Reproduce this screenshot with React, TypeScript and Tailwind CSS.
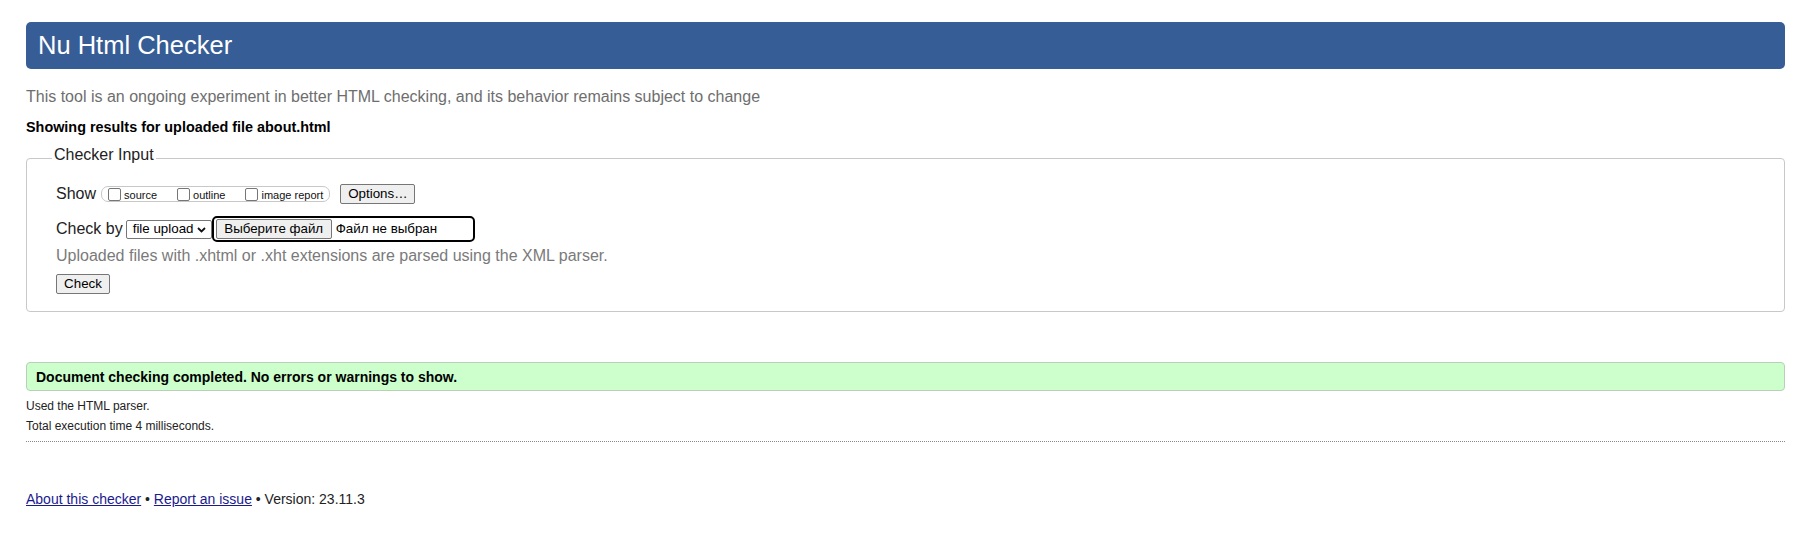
import React from 'react';

const sans = { fontFamily: '"Liberation Sans", Arial, sans-serif' };

function Box({ label }: { label: string }) {
  return (
    <span className="flex items-center mr-[20px] last:mr-0">
      <span className="w-[13px] h-[13px] border border-[#767676] rounded-[2px] bg-white" />
      <span className="ml-[3px] text-[11px] leading-none text-[#111] mt-[3px]">{label}</span>
    </span>
  );
}

function NativeButton({ children, className = '' }: { children: React.ReactNode; className?: string }) {
  return (
    <button
      type="button"
      className={`h-[20px] px-[7px] border border-[#767676] rounded-[2px] bg-[#efefef] text-[13.33px] leading-none text-black ${className}`}
    >
      {children}
    </button>
  );
}

export default function App() {
  return (
    <div className="bg-white min-h-[545px] pl-[26px] pr-[21px] pt-[22px]" style={sans}>
      <div className="h-[47px] rounded-[5px] bg-[#365d95] flex items-center pl-[12px]">
        <h1 className="text-[25.5px] leading-none text-white">Nu Html Checker</h1>
      </div>

      <p className="mt-[18px] text-[16px] leading-[20px] text-[#6e6e6e]">
        This tool is an ongoing experiment in better HTML checking, and its behavior remains subject to change
      </p>
      <p className="mt-[11px] text-[14.4px] leading-[18px] font-bold text-black">
        Showing results for uploaded file about.html
      </p>

      <fieldset className="mt-[10px] border border-[#c8c8c8] rounded-[4px] pl-[29px] pt-[13px] pb-[17px]">
        <legend className="-ml-[4px] px-[2px] pb-[7px] text-[16px] leading-[18px] text-[#222]">Checker Input</legend>

        <div className="flex items-center h-[20px]">
          <span className="text-[16px] leading-none text-[#222]">Show</span>
          <span className="ml-[5px] h-[16px] flex items-center border border-[#c8c8c8] rounded-[7px] pl-[6px] pr-[6px]">
            <Box label="source" />
            <Box label="outline" />
            <Box label="image report" />
          </span>
          <NativeButton className="ml-[10px] w-[75px]">Options…</NativeButton>
        </div>

        <div className="flex items-center h-[26px] mt-[12px]">
          <span className="text-[16px] leading-none text-[#222]">Check by</span>
          <span className="ml-[3px] h-[19px] w-[86px] flex items-center justify-between border border-[#767676] rounded-[2px] bg-white pl-[6px] pr-[5px]">
            <span className="text-[13.33px] leading-none text-black">file upload</span>
            <svg width="9" height="6" viewBox="0 0 9 6" className="mt-[1px]">
              <path d="M1 1l3.5 3.5L8 1" fill="none" stroke="#111" strokeWidth="1.8" />
            </svg>
          </span>
          <span className="ml-0 h-[26px] w-[263px] flex items-center border-2 border-black rounded-[5px] pl-[2px]">
            <NativeButton className="h-[19px] w-[116px] px-0">Выберите файл</NativeButton>
            <span className="ml-[4px] text-[13.33px] leading-none text-black">Файл не выбран</span>
          </span>
        </div>

        <p className="mt-[4px] text-[16px] leading-[20px] text-[#7a7a7a]">
          Uploaded files with .xhtml or .xht extensions are parsed using the XML parser.
        </p>

        <div className="mt-[8px] flex">
          <NativeButton className="w-[54px]">Check</NativeButton>
        </div>
      </fieldset>

      <div className="mt-[50px] h-[29px] flex items-center border border-[#b8d0b8] rounded-[4px] bg-[#ccffcc] pl-[9px]">
        <span className="text-[14px] leading-none font-bold text-black">
          Document checking completed. No errors or warnings to show.
        </span>
      </div>

      <p className="mt-[5px] text-[12px] leading-[20px] text-[#222]">Used the HTML parser.</p>
      <p className="text-[12px] leading-[20px] text-[#222]">Total execution time 4 milliseconds.</p>
      <div className="mt-[5px] border-t border-dotted border-[#888]" />

      <p className="mt-[47px] text-[14px] leading-[20px] text-[#222]">
        <a href="#" className="underline text-[#1a1a8e]">About this checker</a>
        {' • '}
        <a href="#" className="underline text-[#1a1a8e]">Report an issue</a>
        {' • Version: 23.11.3'}
      </p>
    </div>
  );
}
